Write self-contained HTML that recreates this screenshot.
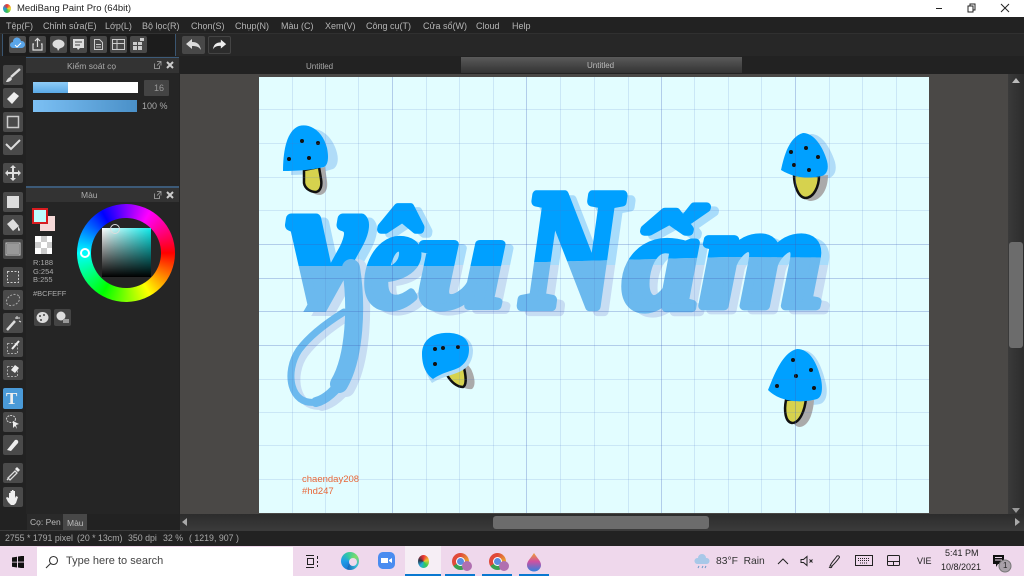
<!DOCTYPE html>
<html><head><meta charset="utf-8"><style>
*{box-sizing:border-box}
html,body{margin:0;padding:0;width:1024px;height:576px;overflow:hidden;background:#222;font-family:"Liberation Sans","Noto Sans CJK SC",sans-serif}
.a{position:absolute}
.t{position:absolute;white-space:nowrap;line-height:1}
.m{position:absolute;top:21px;font-size:9px;color:#b5b5b5;white-space:nowrap;line-height:10px}
.b{position:absolute;background:#484848;border-radius:2px}
.b svg,.g svg{display:block;width:100%;height:100%}
.g{position:absolute;left:3px;width:20px;height:20px;background:#4a4a4a;border-radius:2px}
</style></head><body>
<div class="a" style="left:0;top:0;width:1024px;height:17px;background:#fff"></div>
<div class="a" style="left:3px;top:4px;width:8px;height:9px;border-radius:50%;background:conic-gradient(#e33,#ed3,#3b5,#29d,#e33)"></div>
<div class="t" style="left:17px;top:4px;font-size:9.5px;color:#222">MediBang Paint Pro (64bit)</div>
<svg class="a" style="left:930px;top:0" width="94" height="17" fill="none" stroke="#222"><path d="M6 8.500h6"/><path d="M38 6h5v6h-5zM40 6V4h5v6h-2" stroke-width="1"/><path d="M71 4l8 8M79 4l-8 8"/></svg>

<div class="a" style="left:0;top:17px;width:1024px;height:16px;background:#222"></div>
<div class="m" style="left:6px">Tệp(F)</div><div class="m" style="left:43px">Chỉnh sửa(E)</div><div class="m" style="left:105px">Lớp(L)</div><div class="m" style="left:142px">Bộ lọc(R)</div><div class="m" style="left:191px">Chọn(S)</div><div class="m" style="left:235px">Chụp(N)</div><div class="m" style="left:281px">Màu (C)</div><div class="m" style="left:325px">Xem(V)</div><div class="m" style="left:366px">Công cụ(T)</div><div class="m" style="left:423px">Cửa sổ(W)</div><div class="m" style="left:476px">Cloud</div><div class="m" style="left:512px">Help</div>

<div class="a" style="left:0;top:33px;width:1024px;height:23px;background:#272727;border-top:1px solid #303030"></div>
<div class="a" style="left:2px;top:34px;width:174px;height:22px;background:#1c1c1c;border-left:1px solid #3a5570;border-right:1px solid #3a5570"></div>
<div class="b" style="left:9px;top:36px;width:17px;height:17px;background:#505050"><svg viewBox="0 0 17 17"><path d="M4 12a3 3 0 0 1 0-6 4 4 0 0 1 8-1 3.500 3.500 0 0 1 1 7z" fill="#5aa6ea"/><path d="M6 9l2 2 4-4" stroke="#fff" fill="none"/></svg></div>
<div class="b" style="left:29px;top:36px;width:17px;height:17px"><svg viewBox="0 0 17 17" fill="none" stroke="#ddd" stroke-width="1.200"><path d="M5 8H4v6h9V8h-1M8.500 11V3M6 5l2.500-2.500L11 5"/></svg></div>
<div class="b" style="left:50px;top:36px;width:17px;height:17px"><svg viewBox="0 0 17 17"><ellipse cx="8.500" cy="8" rx="6" ry="4.500" fill="#ddd"/><path d="M7 12l1 3 2-3z" fill="#ddd"/></svg></div>
<div class="b" style="left:70px;top:36px;width:17px;height:17px"><svg viewBox="0 0 17 17"><path d="M3 3h11v9h-4l-2 2-1-2H3z" fill="#ddd"/><path d="M5 6h7M5 9h5" stroke="#444"/></svg></div>
<div class="b" style="left:90px;top:36px;width:17px;height:17px"><svg viewBox="0 0 17 17" fill="none" stroke="#ccc"><path d="M4.500 3.500h5l3 3v7h-8zM6 8.500h5M6 11h5"/></svg></div>
<div class="b" style="left:110px;top:36px;width:17px;height:17px"><svg viewBox="0 0 17 17" fill="none" stroke="#ccc"><path d="M2.500 3.500h12v4h-12zM2.500 7.500v6h12v-6M7 3.500v10"/></svg></div>
<div class="b" style="left:130px;top:36px;width:17px;height:17px"><svg viewBox="0 0 17 17" fill="#ccc"><path d="M3 6h4v3H3zM8 6h4v3H8zM3 10h4v4H3zM8 10h4v4H8zM10 2h4v3h-4z"/></svg></div>
<div class="b" style="left:182px;top:36px;width:23px;height:18px"><svg viewBox="0 0 23 18"><path d="M4 8l6-5v3c6 0 8 3 9 8-2-3-4-4-9-4v3z" fill="#ddd"/></svg></div>
<div class="b" style="left:208px;top:36px;width:23px;height:18px;background:#2c2c2c;border:1px solid #444"><svg viewBox="0 0 23 18"><path d="M19 8l-6-5v3C7 6 5 9 4 14c2-3 4-4 9-4v3z" fill="#eee"/></svg></div>

<div class="a" style="left:180px;top:56px;width:844px;height:18px;background:#222"></div>
<div class="t" style="left:306px;top:63px;font-size:8px;color:#aaa">Untitled</div>
<div class="a" style="left:461px;top:57px;width:281px;height:16px;background:linear-gradient(#5a5a5a,#333)"></div>
<div class="t" style="left:587px;top:62px;font-size:8px;color:#bbb">Untitled</div>

<div class="a" style="left:180px;top:74px;width:828px;height:440px;background:#4a4846"></div>

<svg class="a" style="left:0;top:0" width="1024" height="576" viewBox="0 0 1024 576">
<defs>
<clipPath id="up1"><rect x="259" y="77" width="251" height="189"/></clipPath>
<clipPath id="lo1"><rect x="259" y="266" width="251" height="247"/></clipPath>
<clipPath id="up2"><path d="M510 77h419v181l-100 0-100-1-219 6z"/></clipPath>
<clipPath id="lo2"><path d="M510 263l219-6 200 1v255H510z"/></clipPath>
<clipPath id="sup"><rect x="259" y="77" width="670" height="188"/></clipPath>
<clipPath id="slo"><rect x="259" y="265" width="670" height="248"/></clipPath>
<clipPath id="ym"><rect x="259" y="77" width="251" height="235"/></clipPath>
<clipPath id="ys"><rect x="259" y="77" width="251" height="239"/></clipPath>
</defs>
<rect x="259" y="77" width="670" height="436" fill="#e2fdff"/>
<!-- lettering shadow -->
<g font-family="Liberation Serif" font-style="italic" font-weight="700" font-size="100" stroke-linejoin="round" stroke-linecap="round" stroke-width="6">
<g clip-path="url(#sup)" fill="#a8dcfb" stroke="#a8dcfb">
<g clip-path="url(#ys)"><text transform="translate(296,309) scale(1.7,1.87)">y</text></g>
<text transform="translate(373,310) scale(1.25,1.4)">ê</text>
<text transform="translate(425,310) scale(1.6,1.35)">u</text>
<text transform="translate(530,311) scale(1.35,1.69)">N</text>
<text transform="translate(632,312) scale(1.5,1.4)">ấ</text>
<text transform="translate(708,310) scale(1.6,1.45)">m</text>
</g>
<g clip-path="url(#slo)" fill="#c7ddf3" stroke="#c7ddf3">
<g clip-path="url(#ys)"><text transform="translate(296,309) scale(1.7,1.87)">y</text></g>
<text transform="translate(373,310) scale(1.25,1.4)">ê</text>
<text transform="translate(425,310) scale(1.6,1.35)">u</text>
<text transform="translate(530,311) scale(1.35,1.69)">N</text>
<text transform="translate(632,312) scale(1.5,1.4)">ấ</text>
<text transform="translate(708,310) scale(1.6,1.45)">m</text>
</g>
<g fill="none" stroke="#c7ddf3"><path d="M358 268C364 305 362 360 346 388" stroke-width="18"/><path d="M352 380C344 394 332 404 322 406" stroke-width="10"/><path d="M322 406C296 410 290 375 305 354 316 339 334 326 350 316" stroke-width="7"/></g>
<!-- lettering main -->
<g clip-path="url(#up1)" fill="#00a0ff" stroke="#00a0ff">
<g clip-path="url(#ym)"><text transform="translate(288,305) scale(1.7,1.87)">y</text></g>
<text transform="translate(365,306) scale(1.25,1.4)">ê</text>
<text transform="translate(417,306) scale(1.6,1.35)">u</text>
</g>
<g clip-path="url(#lo1)" fill="#6bb9ee" stroke="#6bb9ee">
<g clip-path="url(#ym)"><text transform="translate(288,305) scale(1.7,1.87)">y</text></g>
<text transform="translate(365,306) scale(1.25,1.4)">ê</text>
<text transform="translate(417,306) scale(1.6,1.35)">u</text>
</g>
<g fill="none" stroke="#6bb9ee"><path d="M351 268C357 305 355 357 339 384" stroke-width="18"/><path d="M345 376C337 390 325 400 316 402" stroke-width="10"/><path d="M316 402C290 406 284 372 299 350 310 335 328 322 344 312" stroke-width="7"/></g>
<g clip-path="url(#up2)" fill="#00a0ff" stroke="#00a0ff">
<text transform="translate(522,306) scale(1.35,1.69)">N</text>
<text transform="translate(624,308) scale(1.5,1.4)">ấ</text>
<text transform="translate(700,306) scale(1.6,1.45)">m</text>
</g>
<g clip-path="url(#lo2)" fill="#6bb9ee" stroke="#6bb9ee">
<text transform="translate(522,306) scale(1.35,1.69)">N</text>
<text transform="translate(624,308) scale(1.5,1.4)">ấ</text>
<text transform="translate(700,306) scale(1.6,1.45)">m</text>
</g>
</g>
<!-- mushrooms -->
<g>
<path d="M291 175c0-20 4-42 18-46 12-2 24 8 28 24 2 8 0 14-4 16-12 4-28 6-42 6z" fill="#b0dcf8"/>
<path d="M306 172v12c2 7 8 11 14 11 6-1 8-7 7-14l-2-14z" fill="#aaa"/>
<path d="M304 170v13c1 6 7 9 12 9 5-1 6-7 5-13l-2-12z" fill="#d6d24e" stroke="#111" stroke-width="2.500"/>
<path d="M283 171c0-18 3-40 16-45 12-3 24 6 28 22 2 10 1 17-3 19-12 3-27 4-41 4z" fill="#00a0ff"/>
<g fill="#111"><circle cx="302" cy="141" r="2"/><circle cx="318" cy="143" r="2"/><circle cx="289" cy="159" r="2"/><circle cx="309" cy="158" r="2"/></g>

<path d="M789 172c3-16 8-34 22-38 12 0 20 16 24 28 2 8 0 14-6 16-14 3-28 2-40-6z" fill="#b0dcf8"/>
<path d="M798 178c0 10 4 22 12 23 10 0 18-10 18-26z" fill="#aaa"/>
<path d="M794 175c0 10 4 22 11 23 9 0 14-12 14-22z" fill="#d6d24e" stroke="#111" stroke-width="2.500"/>
<path d="M781 170c3-14 8-33 22-37 11 0 20 14 24 28 2 8 0 13-5 15-14 3-28 2-41-6z" fill="#00a0ff"/>
<g fill="#111"><circle cx="791" cy="152" r="2"/><circle cx="806" cy="148" r="2"/><circle cx="818" cy="157" r="2"/><circle cx="794" cy="165" r="2"/><circle cx="809" cy="170" r="2"/></g>

<path d="M774 392c5-16 14-38 28-42 14 0 20 18 24 34 2 10 0 18-6 20-14 3-32 0-46-12z" fill="#b0dcf8"/>
<path d="M791 402c-2 10 0 24 8 25 9 0 14-12 15-27z" fill="#aaa"/>
<path d="M786 400c-2 10-1 22 6 23 8 0 13-13 14-25z" fill="#d6d24e" stroke="#111" stroke-width="2.500"/>
<path d="M768 390c5-12 14-38 29-41 13 0 20 14 24 30 2 10 1 18-4 20-14 4-36 4-49-9z" fill="#00a0ff"/>
<g fill="#111"><circle cx="793" cy="360" r="2"/><circle cx="811" cy="370" r="2"/><circle cx="796" cy="376" r="2"/><circle cx="777" cy="386" r="2"/><circle cx="814" cy="388" r="2"/></g>

<path d="M452 378c6 8 14 12 20 11 4-3 3-12-1-20l-6-8z" fill="#aaa"/>
<path d="M447 375c4 7 10 12 16 12 4-2 3-12 0-23z" fill="#d6d24e" stroke="#111" stroke-width="2.500"/>
<path d="M430 382c-4-6-8-12-8-26 0-12 8-22 22-23 14-1 26 4 27 16 0 10-4 16-10 20-8 5-20 6-31 13z" fill="#b0dcf8" transform="translate(2,1)"/>
<path d="M433 379c-6-4-11-12-11-25 0-12 8-20 22-21 14-1 25 4 25 16 0 10-4 14-9 18-7 4-17 5-27 12z" fill="#00a0ff"/>
<g fill="#111"><circle cx="435" cy="349" r="2"/><circle cx="443" cy="348" r="2"/><circle cx="458" cy="347" r="2"/><circle cx="435" cy="364" r="2"/></g>
</g>
<!-- grid -->
<g stroke="#5078c8" stroke-opacity=".16" stroke-width="1">
<path d="M292.500 77v436M325.500 77v436M358.500 77v436M426.500 77v436M459.500 77v436M493.500 77v436M560.500 77v436M594.500 77v436M628.500 77v436M694.500 77v436M728.500 77v436M761.500 77v436M829.500 77v436M862.500 77v436M896.500 77v436"/>
<path d="M259 109.500h670M259 143.500h670M259 177.500h670M259 210.500h670M259 379.500h670M259 412.500h670M259 445.500h670M259 479.500h670"/>
</g>
<g stroke="#4060b8" stroke-opacity=".3" stroke-width="1">
<path d="M392.500 77v436M526.500 77v436M661.500 77v436M795.500 77v436"/>
<path d="M259 244.500h670M259 278.500h670M259 311.500h670M259 345.500h670"/>
</g>
</svg>
<div class="t" style="left:302px;top:475px;font-size:9.500px;color:#e8683a">chaenday208</div>
<div class="t" style="left:302px;top:487px;font-size:9.500px;color:#e8683a">#hd247</div>

<!-- left tools -->
<div class="a" style="left:0;top:56px;width:26px;height:474px;background:#222"></div>
<div class="g" style="top:65px"><svg viewBox="0 0 20 20"><path d="M17 4L8 12" stroke="#ddd" stroke-width="2.500"/><path d="M8 12c-2 0-4 2-5 5 3 0 5-1 6-3z" fill="#ddd"/></svg></div>
<div class="g" style="top:88px"><svg viewBox="0 0 20 20"><path d="M4 11l7-7 5 4-7 8z" fill="#eee"/></svg></div>
<div class="g" style="top:112px"><svg viewBox="0 0 20 20"><rect x="4.500" y="4.500" width="11" height="11" fill="none" stroke="#ccc" stroke-width="1.500"/></svg></div>
<div class="g" style="top:135px"><svg viewBox="0 0 20 20"><path d="M3 9l5 5 9-9" fill="none" stroke="#ddd" stroke-width="2"/></svg></div>
<div class="g" style="top:163px"><svg viewBox="0 0 20 20"><path d="M10 2l3 3h-2v4h4V7l3 3-3 3v-2h-4v4h2l-3 3-3-3h2v-4H5v2l-3-3 3-3v2h4V5H7z" fill="#ddd"/></svg></div>
<div class="g" style="top:192px"><svg viewBox="0 0 20 20"><rect x="4" y="4" width="12" height="12" fill="#ddd"/></svg></div>
<div class="g" style="top:215px"><svg viewBox="0 0 20 20"><path d="M4 9l6-5 6 7-6 5z" fill="#ddd"/><path d="M15 11c1 2 2 3 2 4s-2 1-2 0z" fill="#ddd"/></svg></div>
<div class="g" style="top:239px"><svg viewBox="0 0 20 20"><rect x="3" y="4" width="14" height="12" fill="none" stroke="#ccc"/><rect x="4" y="5" width="12" height="10" fill="#999"/></svg></div>
<div class="g" style="top:267px"><svg viewBox="0 0 20 20"><rect x="4.500" y="4.500" width="11" height="11" fill="none" stroke="#ccc" stroke-dasharray="2 1.500"/></svg></div>
<div class="g" style="top:290px"><svg viewBox="0 0 20 20"><ellipse cx="10" cy="10" rx="7" ry="5" transform="rotate(-30 10 10)" fill="none" stroke="#aaa" stroke-dasharray="2 1.500"/></svg></div>
<div class="g" style="top:313px"><svg viewBox="0 0 20 20"><path d="M4 17L12 8" stroke="#ddd" stroke-width="2.500"/><path d="M14 3v3M12 5h5M16 8l2 1" stroke="#ddd"/></svg></div>
<div class="g" style="top:337px"><svg viewBox="0 0 20 20"><rect x="4.500" y="6.500" width="10" height="10" fill="none" stroke="#aaa" stroke-dasharray="2 1.500"/><path d="M9 12l7-8" stroke="#eee" stroke-width="2"/></svg></div>
<div class="g" style="top:360px"><svg viewBox="0 0 20 20"><rect x="4.500" y="6.500" width="10" height="10" fill="none" stroke="#aaa" stroke-dasharray="2 1.500"/><path d="M8 10l4-5 4 3-4 5z" fill="#eee"/></svg></div>
<div class="g" style="top:388px;height:21px;background:#4a9ad8"></div>
<div class="t" style="left:6px;top:390px;font-size:17px;font-weight:700;font-family:'Liberation Serif',serif;color:#eee">T</div>
<div class="g" style="top:412px"><svg viewBox="0 0 20 20"><ellipse cx="8" cy="7" rx="4.500" ry="3.500" fill="none" stroke="#ccc" stroke-dasharray="2 1"/><path d="M10 9l6 3-3 1 1 4-2-3-2 2z" fill="#eee"/></svg></div>
<div class="g" style="top:435px"><svg viewBox="0 0 20 20"><path d="M4 15l8-10c2-1 4 1 3 3l-7 8z" fill="#eee"/></svg></div>
<div class="g" style="top:463px"><svg viewBox="0 0 20 20"><path d="M5 16l-1 1M5 15l7-7 2 2-7 7z" fill="none" stroke="#ddd" stroke-width="1.300"/><path d="M12 6l2-2 3 3-2 2z" fill="#eee"/></svg></div>
<div class="g" style="top:487px"><svg viewBox="0 0 20 20"><path d="M6 11V6h1.500v4V4H9v6V3h1.500v7V4H12v7l1-2 2 1-2 6-2 2H8l-3-3-2-4 1-1z" fill="#eee"/></svg></div>

<!-- panels -->
<div class="a" style="left:26px;top:57px;width:153px;height:457px;background:#252525;border-top:1px solid #3c5a78"></div>
<div class="a" style="left:26px;top:58px;width:153px;height:15px;background:#333"></div>
<div class="t" style="left:67px;top:62px;font-size:8.500px;color:#aaa">Kiểm soát cọ</div>
<svg class="a" style="left:152px;top:59px" width="24" height="12"><path d="M2.500 4.500v5h5v-3M5 2.500h4v4M9 2.500l-4 4" fill="none" stroke="#aaa" stroke-width=".8"/><path d="M15 3l6 6M21 3l-6 6" stroke="#ccc" stroke-width="2"/></svg>
<div class="a" style="left:33px;top:82px;width:105px;height:11px;background:#fff"></div>
<div class="a" style="left:33px;top:82px;width:35px;height:11px;background:linear-gradient(#8fcdf8,#5aa9e6)"></div>
<div class="a" style="left:144px;top:80px;width:25px;height:16px;background:#444;border-radius:1px"></div>
<div class="t" style="left:154px;top:84px;font-size:9px;color:#999">16</div>
<div class="a" style="left:33px;top:100px;width:104px;height:12px;background:linear-gradient(90deg,#7cc0f4,#4a90c8)"></div>
<div class="t" style="left:142px;top:102px;font-size:9px;color:#aaa">100 %</div>

<div class="a" style="left:26px;top:186px;width:153px;height:2px;background:#3c5a78"></div>
<div class="a" style="left:26px;top:188px;width:153px;height:14px;background:#333"></div>
<div class="t" style="left:81px;top:191px;font-size:8.500px;color:#aaa">Màu</div>
<svg class="a" style="left:152px;top:189px" width="24" height="12"><path d="M2.500 4.500v5h5v-3M5 2.500h4v4M9 2.500l-4 4" fill="none" stroke="#aaa" stroke-width=".8"/><path d="M15 3l6 6M21 3l-6 6" stroke="#ccc" stroke-width="2"/></svg>
<div class="a" style="left:40px;top:216px;width:15px;height:15px;background:#f5d9d8"></div>
<div class="a" style="left:32px;top:208px;width:16px;height:16px;background:#bcfeff;border:2px solid #d81c20"></div>
<div class="a" style="left:35px;top:236px;width:17px;height:18px;background:conic-gradient(#ccc 25%,#fff 0 50%,#ccc 0 75%,#fff 0) 0 0/12px 12px"></div>
<div class="t" style="left:33px;top:259px;font-size:7.500px;line-height:8.500px;color:#aaa;white-space:normal;width:30px">R:188<br>G:254<br>B:255</div>
<div class="t" style="left:33px;top:290px;font-size:7.500px;color:#aaa">#BCFEFF</div>
<div class="b" style="left:34px;top:309px;width:17px;height:17px;background:#444"><svg viewBox="0 0 17 17"><ellipse cx="8.500" cy="8.500" rx="6" ry="5.500" fill="#ddd"/><circle cx="6" cy="7" r="1" fill="#444"/><circle cx="10" cy="6" r="1" fill="#444"/><circle cx="7" cy="11" r="1" fill="#444"/></svg></div>
<div class="b" style="left:54px;top:309px;width:17px;height:17px;background:#444"><svg viewBox="0 0 17 17"><ellipse cx="7" cy="7" rx="4.500" ry="4.500" fill="#ddd"/><rect x="9" y="10" width="6" height="4" fill="#999"/></svg></div>
<div class="a" style="left:77px;top:204px;width:98px;height:98px;border-radius:50%;background:conic-gradient(from 90deg,#f00,#ff0,#0f0,#0ff,#00f,#f0f,#f00)"></div>
<div class="a" style="left:91px;top:218px;width:70px;height:70px;border-radius:50%;background:#252525"></div>
<div class="a" style="left:102px;top:228px;width:49px;height:49px;background:linear-gradient(to top,#000,transparent),linear-gradient(to right,#fff,#10ecec)"></div>
<div class="a" style="left:110px;top:224px;width:10px;height:10px;border-radius:50%;border:1px solid #ddd"></div>
<div class="a" style="left:80px;top:248px;width:10px;height:10px;border-radius:50%;border:2px solid #fff"></div>

<div class="a" style="left:27px;top:514px;width:36px;height:16px;background:#2a2a2a"></div>
<div class="t" style="left:30px;top:518px;font-size:8.500px;color:#bbb">Cọ: Pen</div>
<div class="a" style="left:63px;top:514px;width:24px;height:17px;background:#484848"></div>
<div class="t" style="left:67px;top:519px;font-size:8.500px;color:#bbb">Màu</div>

<!-- scrollbars -->
<div class="a" style="left:1008px;top:74px;width:16px;height:442px;background:linear-gradient(90deg,#3a3a3a,#2c2c2c)"></div>
<div class="a" style="left:1009px;top:242px;width:14px;height:106px;background:#6c6c6c;border-radius:3px"></div>
<svg class="a" style="left:1009px;top:76px" width="14" height="10"><path d="M7 2l4 5H3z" fill="#bbb"/></svg>
<svg class="a" style="left:1009px;top:505px" width="14" height="10"><path d="M7 8l4-5H3z" fill="#999"/></svg>
<div class="a" style="left:180px;top:514px;width:844px;height:16px;background:linear-gradient(#2c2c2c,#3a3a3a)"></div>
<div class="a" style="left:493px;top:516px;width:216px;height:13px;background:#6c6c6c;border-radius:3px"></div>
<svg class="a" style="left:180px;top:517px" width="10" height="10"><path d="M2 5l5-4v8z" fill="#aaa"/></svg>
<svg class="a" style="left:1012px;top:517px" width="10" height="10"><path d="M8 5L3 1v8z" fill="#aaa"/></svg>

<!-- status -->
<div class="a" style="left:0;top:530px;width:1024px;height:16px;background:#222;border-top:1px solid #3a3a3a"></div>
<div class="t" style="left:5px;top:534px;font-size:8.800px;color:#aaa">2755 * 1791 pixel</div>
<div class="t" style="left:77px;top:534px;font-size:8.800px;color:#aaa">(20 * 13cm)</div>
<div class="t" style="left:128px;top:534px;font-size:8.800px;color:#aaa">350 dpi</div>
<div class="t" style="left:163px;top:534px;font-size:8.800px;color:#aaa">32 %</div>
<div class="t" style="left:189px;top:534px;font-size:8.800px;color:#aaa">( 1219, 907 )</div>

<!-- taskbar -->
<div class="a" style="left:0;top:546px;width:1024px;height:30px;background:#efd8ec"></div>
<svg class="a" style="left:12px;top:556px" width="12" height="12" fill="#111"><path d="M0 1.500l5-.8v5H0zM6 .5l6-.9v6H6zM0 6.500h5v5l-5-.8zM6 6.500h6v6l-6-1z"/></svg>
<div class="a" style="left:37px;top:547px;width:256px;height:29px;background:#fff"></div>
<svg class="a" style="left:45px;top:555px" width="14" height="14" fill="none" stroke="#333" stroke-width="1.100"><circle cx="8.500" cy="5.500" r="4"/><path d="M5.500 8.500L1 13"/></svg>
<div class="t" style="left:66px;top:556px;font-size:11px;color:#444">Type here to search</div>
<svg class="a" style="left:305px;top:554px" width="15" height="15" fill="none" stroke="#222"><path d="M1 1.500h8M1 13.500h8M2.500 4.500h6v6h-6zM12.500 2v3M12.500 7v2M12.500 11v2"/></svg>
<div class="a" style="left:341px;top:552px;width:18px;height:18px;border-radius:50%;background:conic-gradient(from 200deg,#1c7ed6,#1f9ee8,#35c9a0,#7ddc6a,#35b9d8,#1763b8)"></div>
<div class="a" style="left:349px;top:558px;width:8px;height:8px;border-radius:50%;background:#efd8ec"></div>
<div class="a" style="left:378px;top:552px;width:17px;height:17px;border-radius:5px;background:#4a8cf0"></div>
<svg class="a" style="left:378px;top:552px" width="17" height="17"><path d="M3 6h7v5H3zM11 8l3-2v5l-3-2z" fill="#fff"/></svg>
<div class="a" style="left:405px;top:546px;width:36px;height:30px;background:#f6eef5"></div>
<div class="a" style="left:405px;top:574px;width:36px;height:2px;background:#0a78d0"></div>
<div class="a" style="left:418px;top:555px;width:11px;height:13px;border-radius:50%;background:conic-gradient(#e33,#ec3,#3c5,#2ad,#334,#e33)"></div>
<div class="a" style="left:445px;top:574px;width:30px;height:2px;background:#0a78d0"></div>
<div class="a" style="left:482px;top:574px;width:30px;height:2px;background:#0a78d0"></div>
<div class="a" style="left:519px;top:574px;width:30px;height:2px;background:#0a78d0"></div>
<div class="a" style="left:452px;top:553px;width:17px;height:17px;border-radius:50%;background:conic-gradient(#e04a3a,#e8c030 33%,#3aa050 33% 66%,#e04a3a 66%)"></div>
<div class="a" style="left:456px;top:557px;width:9px;height:9px;border-radius:50%;background:#5a8ee0;border:1px solid #fff"></div>
<div class="a" style="left:462px;top:561px;width:10px;height:10px;border-radius:50%;background:#b070b0"></div>
<div class="a" style="left:489px;top:553px;width:17px;height:17px;border-radius:50%;background:conic-gradient(#e04a3a,#e8c030 33%,#3aa050 33% 66%,#e04a3a 66%)"></div>
<div class="a" style="left:493px;top:557px;width:9px;height:9px;border-radius:50%;background:#5a8ee0;border:1px solid #fff"></div>
<div class="a" style="left:499px;top:561px;width:10px;height:10px;border-radius:50%;background:#b070b0"></div>
<svg class="a" style="left:526px;top:552px" width="16" height="20"><defs><linearGradient id="dr" x1="0" y1="0" x2="0" y2="1"><stop offset="0" stop-color="#f0a030"/><stop offset=".45" stop-color="#d050a0"/><stop offset="1" stop-color="#3080e0"/></linearGradient></defs><path d="M8 1c3 5 7 8 7 12a7 6.500 0 0 1-14 0c0-4 4-7 7-12z" fill="url(#dr)"/></svg>

<svg class="a" style="left:694px;top:554px" width="16" height="16"><path d="M3 10a3 3 0 0 1 1-6 4 4 0 0 1 8 0 3 3 0 0 1 1 6z" fill="#a8c8e8"/><path d="M5 12l-1 2M9 12l-1 2M12 12l-1 2" stroke="#6a9ac8"/></svg>
<div class="t" style="left:716px;top:557px;font-size:10.300px;color:#333;white-space:pre">83°F  Rain</div>
<svg class="a" style="left:776px;top:556px" width="14" height="10" fill="none" stroke="#222"><path d="M2 8l5-5 5 5"/></svg>
<svg class="a" style="left:800px;top:555px" width="14" height="12" fill="none" stroke="#222"><path d="M1 4.500h2.500L7 1.500v9L3.500 7.500H1zM9.500 4.500l3 3M12.500 4.500l-3 3"/></svg>
<svg class="a" style="left:828px;top:554px" width="14" height="15" fill="none" stroke="#222"><path d="M2 12c1-3 5-7 7-10 2-1 3 1 2 2-2 3-5 6-7 8zM1 13c1 1 3 1 3-1"/></svg>
<svg class="a" style="left:855px;top:555px" width="18" height="11" fill="none" stroke="#222"><rect x=".5" y=".5" width="17" height="10"/><path d="M3 3.500h12M3 5.500h12M5 8h8" stroke-dasharray="1 1"/></svg>
<svg class="a" style="left:887px;top:555px" width="14" height="12" fill="none" stroke="#222"><rect x=".5" y=".5" width="12" height="10" rx="1"/><path d="M.5 6.500h12M6.500 6.500v4"/></svg>
<div class="t" style="left:917px;top:557px;font-size:9px;color:#222">VIE</div>
<div class="t" style="left:945px;top:549px;font-size:9px;color:#222">5:41 PM</div>
<div class="t" style="left:941px;top:563px;font-size:9px;color:#222">10/8/2021</div>
<svg class="a" style="left:992px;top:554px" width="22" height="20"><path d="M1 1h11v9H6l-2 3v-3H1z" fill="#111"/><path d="M3 3.500h7M3 6h7" stroke="#efd8ec"/><circle cx="13" cy="12" r="6" fill="#a8a0a8" stroke="#777"/></svg>
<div class="t" style="left:1003px;top:562px;font-size:8px;color:#222">1</div>
</body></html>
